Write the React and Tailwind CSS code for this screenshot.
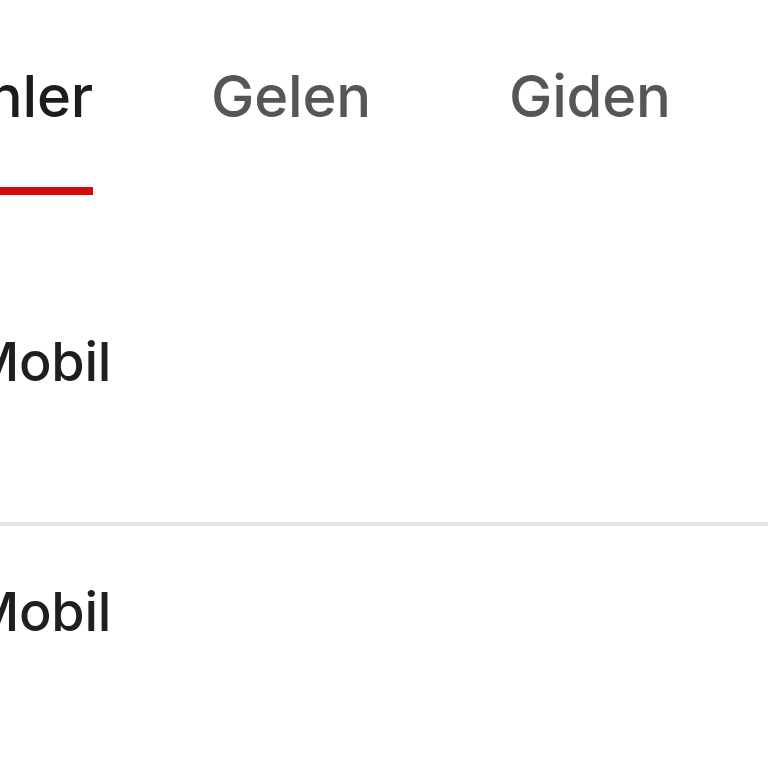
export default function App() {
  const tabs = [
    { id: "all", label: "Bekleyenler" },
    { id: "in", label: "Gelen" },
    { id: "out", label: "Giden" },
  ];
  const active = "all";

  return (
    <div className="w-[768px] h-[768px] overflow-hidden bg-white" style={{ fontFamily: "Inter, 'Noto Sans', sans-serif" }}>
      {/* Tabs */}
      <div className="flex items-start pt-[67px]">
        {tabs.map((t, i) => (
          <div
            key={t.id}
            className={`flex flex-col shrink-0 ${i === 0 ? "w-[93px] items-end" : i === 1 ? "ml-[118px]" : "ml-[138px]"}`}
          >
            <span
              className={`text-[58px] leading-none font-medium whitespace-nowrap tracking-[-0.2px] ${active === t.id ? "text-[#1c1c1e]" : "text-[#56565a]"}`}
            >
              {t.label}
            </span>
            {active === t.id && <div className="mt-[62px] h-2 w-[300px] self-end bg-[#d40a0f]" />}
          </div>
        ))}
      </div>

      {/* Rows */}
      <div className="mt-[140px] flex flex-col">
        <div className="h-[191px] border-b-4 border-[#e4e4e4] -ml-[30px]">
          <span className="text-[54px] leading-none font-medium text-[#1f1f1f] tracking-[-0.3px]">Mobil</span>
        </div>
        <div className="pt-[59px] -ml-[30px]">
          <span className="text-[54px] leading-none font-medium text-[#1f1f1f] tracking-[-0.3px]">Mobil</span>
        </div>
      </div>
    </div>
  );
}
